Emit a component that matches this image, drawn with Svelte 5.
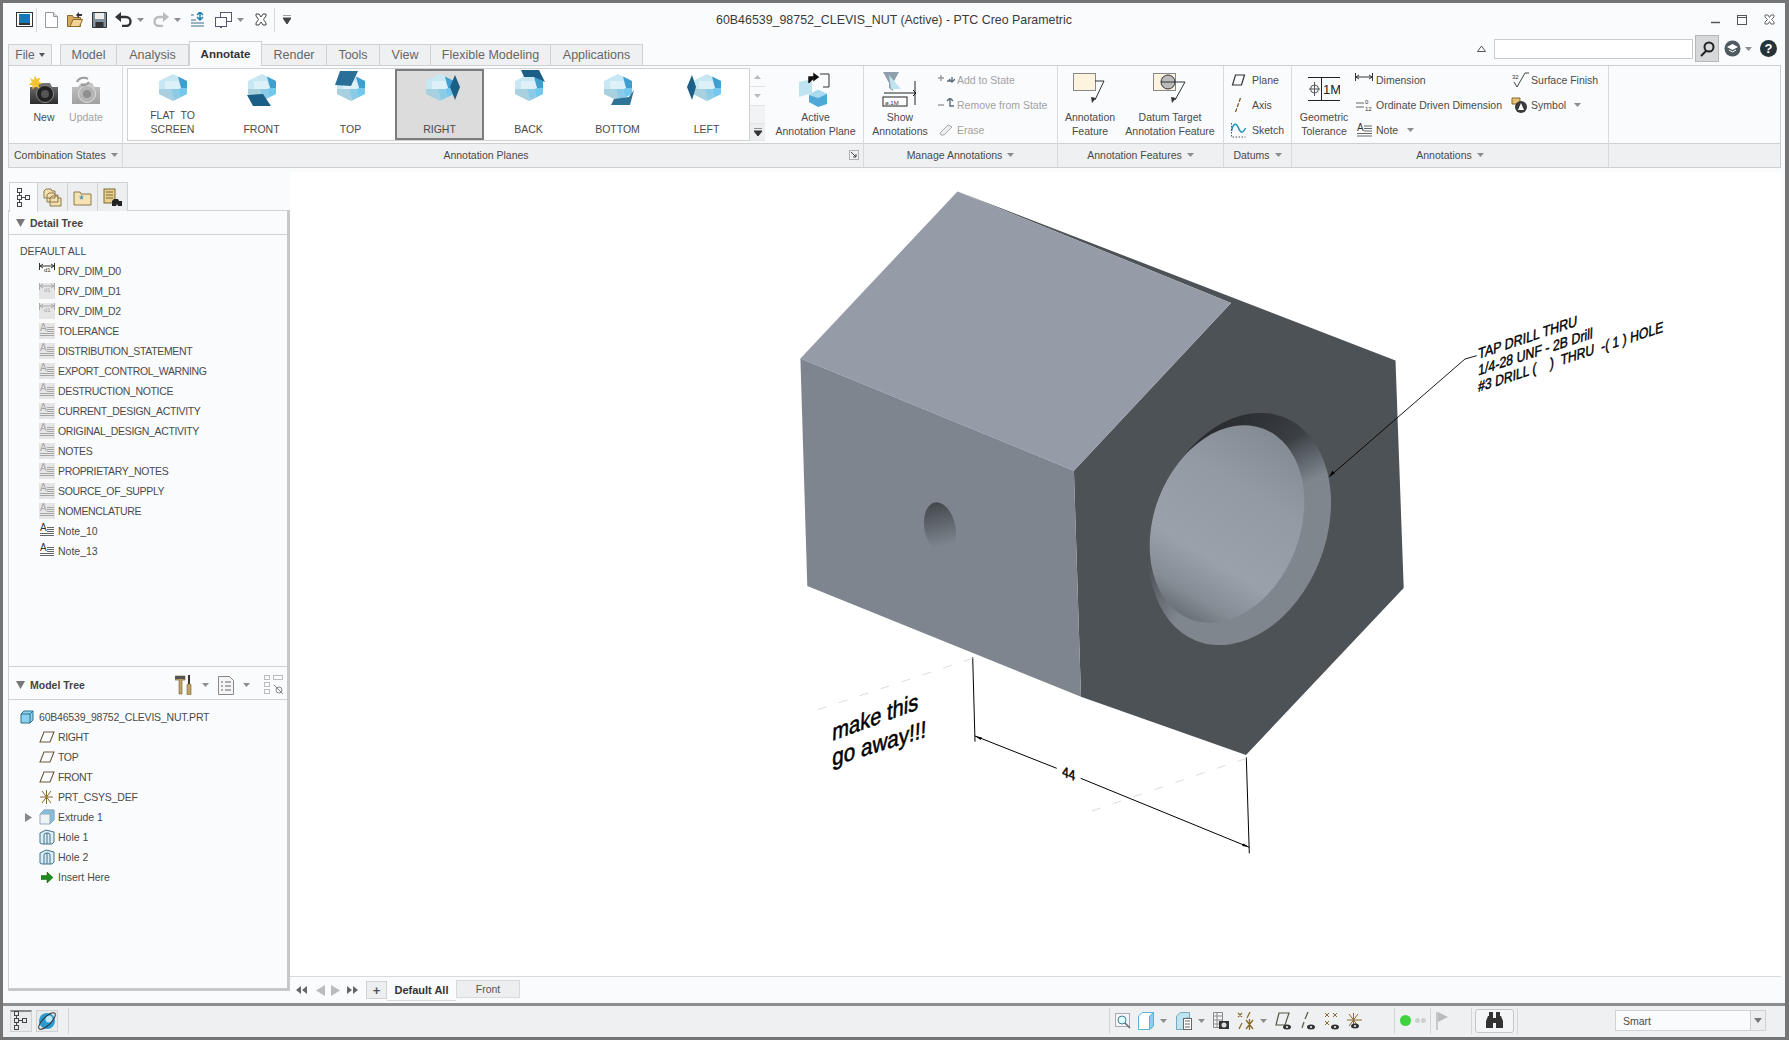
<script>
  const tabs = [
    { n: 'Model', c: 'w57' }, { n: 'Analysis', c: 'w72' }, { n: 'Annotate', c: 'w73 on' },
    { n: 'Render', c: 'w65' }, { n: 'Tools', c: 'w53' }, { n: 'View', c: 'w51' },
    { n: 'Flexible Modeling', c: 'w120' }, { n: 'Applications', c: 'w92' }
  ];
  const planes = [
    { k: 'flat', l: ['FLAT  TO', 'SCREEN'] }, { k: 'front', l: ['FRONT'] }, { k: 'top', l: ['TOP'] },
    { k: 'right', l: ['RIGHT'] }, { k: 'back', l: ['BACK'] }, { k: 'bottom', l: ['BOTTOM'] }, { k: 'left', l: ['LEFT'] }
  ];
  const detail = [
    ['dim', 'DRV_DIM_D0', false], ['dim', 'DRV_DIM_D1', true], ['dim', 'DRV_DIM_D2', true],
    ['note', 'TOLERANCE', true], ['note', 'DISTRIBUTION_STATEMENT', true], ['note', 'EXPORT_CONTROL_WARNING', true],
    ['note', 'DESTRUCTION_NOTICE', true], ['note', 'CURRENT_DESIGN_ACTIVITY', true], ['note', 'ORIGINAL_DESIGN_ACTIVITY', true],
    ['note', 'NOTES', true], ['note', 'PROPRIETARY_NOTES', true], ['note', 'SOURCE_OF_SUPPLY', true],
    ['note', 'NOMENCLATURE', true], ['note', 'Note_10', false], ['note', 'Note_13', false]
  ];
</script>

{#snippet arrowDown(c = '')}
  <svg class={'dd ' + c} width="7" height="4" viewBox="0 0 7 4"><path d="M0 0h7L3.5 4z" fill="#8b8d90" /></svg>
{/snippet}

{#snippet treeGlyph()}
  <svg width="16" height="20" viewBox="0 0 16 20" fill="none" stroke="#444"><rect x="1.5" y=".5" width="4" height="4" /><rect x="1.5" y="7.5" width="4" height="4" /><rect x="1.5" y="14.5" width="4" height="4" /><rect x="9.5" y="7.5" width="4" height="4" /><path d="M3.5 4.5v3M3.5 11.5v3M5.5 9.5h4" /></svg>
{/snippet}

{#snippet noteIcon(bg)}
  <svg width="16" height="16" viewBox="0 0 16 16" class="ti" class:shade={bg}>
    <text x="1" y="8" class="glyph" class:fade={bg}>A</text>
    <path d="M8 4.5h7M8 6.5h7M8 8.5h7M1 10.5h14M1 12.5h14" stroke={bg ? '#a8a8a8' : '#666'} fill="none" />
  </svg>
{/snippet}

{#snippet dimIcon(bg)}
  <svg width="16" height="16" viewBox="0 0 16 16" class="ti" class:shade={bg}>
    <path d="M.5 0v7M15.5 0v7M1 3h14M1 3l3-2M1 3l3 2M15 3l-3-2M15 3l-3 2" stroke={bg ? '#aaa' : '#333'} fill="none" />
    <text x="5" y="9" class="tiny" class:fade={bg}>d1</text>
  </svg>
{/snippet}

{#snippet planeIcon()}
  <svg width="16" height="12" viewBox="0 0 16 12"><path d="M5 1h10l-4 10H1z" fill="none" stroke="#6b5b3e" stroke-width="1.1" /></svg>
{/snippet}

{#snippet holeIcon()}
  <svg width="16" height="16" viewBox="0 0 16 16" fill="#d9eef7" stroke="#48728a"><path d="M1 4l6-3 8 2v10l-2 2H3l-2-1z" /><path d="M5 15V6q0-2 3-2t3 2v9M8 4v11" fill="none" /></svg>
{/snippet}

{#snippet cube(k)}
  <svg width="44" height="40" viewBox="0 0 44 40">
    <path d="M22 5l14 7v13L22 32 8 25V12z" fill="#c7e8f3" />
    <path d="M27 7.5L36 12v7h-6z" fill="#3f9fd0" />
    <path d="M36 19v6l-7 3.5L27 20l3-1z" fill="#74c8ee" />
    <path d="M8 20h12l3 11.5-1 .5L8 25z" fill="#a9d0df" />
    <path d="M20 20h7l2 8.5L23 31.5z" fill="#8ccbe6" />
    <path d="M14 12h13l3 7-3 1H14z" fill="#dff1f8" />
    {#if k === 'front'}<path d="M7 26l16-1 8 12H13z" fill="#1c5f86" />{/if}
    {#if k === 'top'}<path d="M11 2h18l-7 15-16-1z" fill="#2a6f98" />{/if}
    {#if k === 'right'}<path d="M37 6l5 12-5 13-5-13z" fill="#1c5f86" />{/if}
    {#if k === 'back'}<path d="M14 1h18l6 12-11-5H17z" fill="#1c5f86" />{/if}
    {#if k === 'bottom'}<path d="M38 21l-4 15H15l3-6 15-2z" fill="#2f7396" />{/if}
    {#if k === 'left'}<path d="M7 6l-5 12 5 13 4-13z" fill="#1c5f86" />{/if}
  </svg>
{/snippet}

{#snippet camera(gray)}
  <svg width="32" height="30" viewBox="0 0 32 30">
    <defs>
      <linearGradient id={gray ? 'cg' : 'cd'} x1="0" y1="0" x2="0" y2="1">
        <stop offset="0" stop-color={gray ? '#c4c4c4' : '#777'} /><stop offset="1" stop-color={gray ? '#a0a0a0' : '#2c2c2c'} />
      </linearGradient>
    </defs>
    <path d="M2 12h6l3-4h11l2 4h6v17H2z" fill={gray ? 'url(#cg)' : 'url(#cd)'} />
    <circle cx="17" cy="19" r="8.5" fill={gray ? '#b5b5b5' : '#222'} stroke={gray ? '#ddd' : '#888'} />
    <circle cx="17" cy="19" r="4" fill={gray ? '#8f8f8f' : '#555'} />
    {#if gray}
      <path d="M7 7a7 6 0 0 1 11-3M19 7a7 6 0 0 1-8 3" stroke="#9b9b9b" stroke-width="2" fill="none" />
    {:else}
      <path d="M7 0l1.5 4 4-1.5-2 4 4 2-4 1 1 4-4-2-3 3 0-4-4-1 3.5-2.5-2-4 4 2z" fill="#f4c430" />
    {/if}
  </svg>
{/snippet}

<div class="window">
  <header class="titlebar">
    <div class="qat">
      <svg class="g0" width="17" height="15" viewBox="0 0 17 15"><rect x=".5" y=".5" width="16" height="14" fill="#fff" stroke="#333" /><rect x="3" y="2" width="11" height="9" fill="#1479b8" /><rect x="3" y="11" width="11" height="2" fill="#333" /></svg>
      <i class="qsep g3"></i>
      <svg class="g8" width="13" height="16" viewBox="0 0 13 16"><path d="M.5.5h8l4 4v11H.5z" fill="#fff" stroke="#999" /><path d="M8.5.5v4h4" fill="#ddd" stroke="#999" /></svg>
      <svg class="g9" width="16" height="15" viewBox="0 0 16 15"><path d="M.5 3.5h5l1 2h7v9H.5z" fill="#d8a95a" stroke="#8b6a2c" /><path d="M3 14.5l3-7h9.5l-3 7z" fill="#f2d596" stroke="#8b6a2c" /><path d="M9 3l3-3v2h3v2h-3v2z" fill="#333" /></svg>
      <svg class="g9" width="15" height="16" viewBox="0 0 15 16"><path d="M.5.5h14v15H.5z" fill="#7e8f9e" stroke="#333" /><rect x="3" y="1" width="9" height="6" fill="#eee" /><rect x="3.5" y="10" width="8" height="5" fill="#333" /></svg>
      <svg class="g8" width="17" height="15" viewBox="0 0 17 15"><path d="M4 5h7a4.5 4.5 0 0 1 0 9H7" fill="none" stroke="#333" stroke-width="2.4" /><path d="M6 0v10L0 5z" fill="#333" /></svg>
      <span class="g5">{@render arrowDown()}</span>
      <svg class="g9" width="16" height="15" viewBox="0 0 16 15"><path d="M12 5H6a4.5 4.5 0 0 0 0 9h4" fill="none" stroke="#bbb" stroke-width="2.4" /><path d="M10 0v10l6-5z" fill="#bbb" /></svg>
      <span class="g5">{@render arrowDown()}</span>
      <svg class="g9" width="15" height="16" viewBox="0 0 15 16"><path d="M1 3h3M1 8h5M1 11h13M1 14h13" stroke="#3d6f8c" /><path d="M7 3l3-3 3 3M10 0v8M7 5l3 3 3-3" stroke="#1c7fb0" fill="none" stroke-width="1.5" /></svg>
      <svg class="g10" width="17" height="16" viewBox="0 0 17 16" fill="#fff" stroke="#557"><rect x="5.5" y=".5" width="11" height="9" /><rect x=".5" y="5.5" width="11" height="9" /><path d="M7 15.5h-2M6 14.5v1" /></svg>
      <span class="g5">{@render arrowDown()}</span>
      <svg class="g11" width="12" height="13" viewBox="0 0 12 13" fill="#fff" stroke="#444"><path d="M1 1h3l2 3 2-3h3v2L8.5 6.5 11 10v2H8L6 9l-2 3H1v-2l2.5-3.5L1 3z" /></svg>
      <i class="qsep g7"></i>
      <svg class="g8" width="8" height="9" viewBox="0 0 8 9"><path d="M0 0h8M0 3h8L4 9z" stroke="#444" fill="#444" /></svg>
    </div>
    <div class="title">60B46539_98752_CLEVIS_NUT (Active) - PTC Creo Parametric</div>
    <div class="winctl">
      <svg width="9" height="9" viewBox="0 0 9 9"><path d="M0 7.5h9" stroke="#555" stroke-width="1.5" /></svg>
      <svg class="g17" width="10" height="10" viewBox="0 0 10 10"><rect x=".5" y=".5" width="9" height="9" fill="none" stroke="#555" /><path d="M0 2.5h10" stroke="#555" /></svg>
      <svg class="g17" width="11" height="11" viewBox="0 0 11 11" fill="#fff" stroke="#666"><path d="M1 1h3l1.5 2.5L7 1h3v2L7.5 5.5 10 8v2H7L5.5 7.5 4 10H1V8l2.5-2.5L1 3z" /></svg>
    </div>
  </header>

  <div class="tabrow">
    <div class="file">File <svg width="6" height="4" viewBox="0 0 6 4"><path d="M0 0h6L3 4z" fill="#555" /></svg></div>
    <nav class="tabs">
      {#each tabs as t}<div class={'tab ' + t.c}>{t.n}</div>{/each}
    </nav>
    <div class="search">
      <svg class="chev" width="9" height="7" viewBox="0 0 9 7" fill="none" stroke="#555"><path d="M.5 6.5L4.5 1l4 5.5z" /></svg>
      <div class="sbox"></div>
      <div class="sbtn"><svg width="15" height="16" viewBox="0 0 15 16" fill="none" stroke="#222" stroke-width="2"><circle cx="9" cy="6" r="4.5" /><path d="M6 10l-5 5" /></svg></div>
      <svg class="g5" width="17" height="17" viewBox="0 0 17 17"><circle cx="8.5" cy="8.5" r="8" fill="#4d5a60" /><path d="M3 7l5.500-3 5.500 3-5.500 3z" fill="#fff" /><path d="M5 10l3.500 2 3.500-2" fill="none" stroke="#fff" /></svg>
      <span class="g4">{@render arrowDown()}</span>
      <svg class="g8" width="17" height="17" viewBox="0 0 17 17"><circle cx="8.5" cy="8.5" r="8.5" fill="#26343a" /><text x="8.5" y="13" class="help">?</text></svg>
    </div>
  </div>

  <section class="ribbon">
    <div class="grp c-comb">
      <div class="body comb">
        <div class="big w42"><div class="bi cam">{@render camera(false)}</div><span>New</span></div>
        <div class="big w42 off"><div class="bi cam">{@render camera(true)}</div><span>Update</span></div>
      </div>
      <div class="foot left">Combination States {@render arrowDown('fa')}</div>
    </div>

    <div class="grp c-plane">
      <div class="body planes">
        <div class="gallery">
          {#each planes as p}
            <div class="gi" class:sel={p.k === 'right'}>
              {@render cube(p.k)}
              <div class="gl">{#each p.l as line}<span>{line}</span>{/each}</div>
            </div>
          {/each}
        </div>
        <div class="gscroll">
          <div class="sb"><svg width="7" height="4" viewBox="0 0 7 4"><path d="M0 4h7L3.5 0z" fill="#bbb" /></svg></div>
          <div class="sb"><svg width="7" height="4" viewBox="0 0 7 4"><path d="M0 0h7L3.5 4z" fill="#bbb" /></svg></div>
          <div class="sb grow"></div>
          <div class="sb dark"><svg width="8" height="8" viewBox="0 0 8 8"><path d="M0 0h8M0 3h8L4 8z" stroke="#333" fill="#333" /></svg></div>
        </div>
        <div class="big w98">
          <div class="bi">
            <svg width="38" height="36" viewBox="0 0 38 36"><path d="M2 11l13-3v14L2 26z" fill="#bfe4f1" /><path d="M12 24l9-5 9 4v10l-9 3-9-5z" fill="#4fa9d6" /><path d="M21 19l9 4-9 4-9-3z" fill="#a8dbef" /><path d="M23 3h9v13h-6" fill="none" stroke="#333" /><path d="M12 12V6h7M17 3l4 3-4 3z" stroke="#111" stroke-width="1.5" fill="#111" /></svg>
          </div>
          <span>Active</span><span>Annotation Plane</span>
        </div>
      </div>
      <div class="foot center pr">Annotation Planes
        <svg class="launch" width="10" height="10" viewBox="0 0 10 10"><rect x=".5" y=".5" width="9" height="9" fill="none" stroke="#b0b0b0" /><path d="M2 2l5 5M7 4v3H4" stroke="#444" fill="none" /></svg>
      </div>
    </div>

    <div class="grp c-manage">
      <div class="body rowb">
        <div class="big w72">
          <div class="bi">
            <svg width="36" height="36" viewBox="0 0 36 36"><path d="M1 1h16l-6 11v8l-4-3v-5z" fill="#8fa0ac" /><path d="M7 4l12 14H9z" fill="#bfe4f1" /><path d="M2 22h31M31 19l3 3-3 3" fill="none" stroke="#222" /><path d="M33 10v24" stroke="#222" /><rect x="1" y="26" width="24" height="9" fill="#fff" stroke="#222" /><text x="3" y="33.5" class="tiny">ø.1M</text></svg>
          </div>
          <span>Show</span><span>Annotations</span>
        </div>
        <div class="smalls m-a off">
          <div class="si"><svg width="18" height="14" viewBox="0 0 18 14"><path d="M4 2v6M1 5h6" stroke="#999" stroke-width="1.4" /><path d="M10 8h5v-4M12 6l3 3 3-3" fill="none" stroke="#5c6d78" stroke-width="1.4" /></svg><span>Add to State</span></div>
          <div class="si"><svg width="18" height="14" viewBox="0 0 18 14"><path d="M1 7h6" stroke="#999" stroke-width="1.4" /><path d="M10 3l3-3 3 3M13 0v8h4" fill="none" stroke="#5c6d78" stroke-width="1.4" /></svg><span>Remove from State</span></div>
          <div class="si"><svg width="18" height="14" viewBox="0 0 18 14"><path d="M3 10l8-8 4 2-8 8H4z" fill="#eee" stroke="#aaa" /></svg><span>Erase</span></div>
        </div>
      </div>
      <div class="foot center">Manage Annotations {@render arrowDown('fa')}</div>
    </div>

    <div class="grp c-feat">
      <div class="body rowb">
        <div class="big w64">
          <div class="bi feat">
            <svg width="34" height="32" viewBox="0 0 34 32"><rect x=".5" y=".5" width="22" height="17" fill="#fdf3df" stroke="#888" /><path d="M22 8h9L22 27" fill="none" stroke="#333" /><path d="M18 24l5 1-4 5z" fill="#333" /></svg>
          </div>
          <span>Annotation</span><span>Feature</span>
        </div>
        <div class="big w96">
          <div class="bi feat">
            <svg width="34" height="32" viewBox="0 0 34 32"><rect x=".5" y=".5" width="22" height="17" fill="#fdf3df" stroke="#888" /><circle cx="15" cy="9" r="7" fill="#bbb" stroke="#333" /><path d="M8 9h24L22 27" fill="none" stroke="#333" /><path d="M18 24l5 1-4 5z" fill="#333" /></svg>
          </div>
          <span>Datum Target</span><span>Annotation Feature</span>
        </div>
      </div>
      <div class="foot center">Annotation Features {@render arrowDown('fa')}</div>
    </div>

    <div class="grp c-dat">
      <div class="body rowb">
        <div class="smalls m-d">
          <div class="si dd20"><svg width="14" height="12" viewBox="0 0 14 12"><path d="M4 1h9l-3 10H1z" fill="none" stroke="#333" stroke-width="1.2" /></svg><span>Plane</span></div>
          <div class="si dd20"><svg width="14" height="14" viewBox="0 0 14 14"><path d="M9 0l-5 14" stroke="#7a5a2a" stroke-width="1.3" stroke-dasharray="4 1.5" /></svg><span>Axis</span></div>
          <div class="si dd20"><svg width="16" height="16" viewBox="0 0 16 16"><path d="M1 9c2-9 5-8 7-3s4 6 7 0" fill="none" stroke="#1f90b8" stroke-width="1.5" /><path d="M1 1v14h14" fill="none" stroke="#555" stroke-dasharray="1.5 1.5" /></svg><span>Sketch</span></div>
        </div>
      </div>
      <div class="foot center">Datums {@render arrowDown('fa')}</div>
    </div>

    <div class="grp c-ann">
      <div class="body rowb">
        <div class="big w64">
          <div class="bi gt">
            <svg width="32" height="24" viewBox="0 0 32 24"><path d="M0 .5h32M0 23.5h32M13.5 1v22" stroke="#222" fill="none" /><circle cx="6.5" cy="12" r="4" fill="none" stroke="#555" /><path d="M6.5 5v14M1 12h11" stroke="#555" /><text x="15" y="17" class="gtxt">1M</text></svg>
          </div>
          <span>Geometric</span><span>Tolerance</span>
        </div>
        <div class="smalls m-n">
          <div class="si"><svg width="18" height="14" viewBox="0 0 18 14"><path d="M.5 0v8M17.5 0v8M1 4h16M1 4l3-2M1 4l3 2M17 4l-3-2M17 4l-3 2" stroke="#333" fill="none" /></svg><span>Dimension</span></div>
          <div class="si"><svg width="18" height="14" viewBox="0 0 18 14"><path d="M1 5h8M1 9h8" stroke="#666" /><text x="10" y="6" class="tiny">0</text><text x="10" y="13" class="tiny">12</text></svg><span>Ordinate Driven Dimension</span></div>
          <div class="si"><svg width="18" height="14" viewBox="0 0 18 14"><text x="2" y="8" class="glyph">A</text><path d="M9 3h8M9 5.5h8M9 8h8M2 10.5h15M2 13h15" stroke="#666" fill="none" /></svg><span>Note</span> {@render arrowDown('na')}</div>
        </div>
        <div class="smalls m-s">
          <div class="si"><svg width="18" height="16" viewBox="0 0 18 16"><text x="1" y="7" class="tiny">32</text><path d="M3 10l3 5L14 1h4" fill="none" stroke="#444" /></svg><span>Surface Finish</span></div>
          <div class="si"><svg width="18" height="16" viewBox="0 0 18 16"><path d="M1 1h8v6H1z" fill="#e6c277" stroke="#86682c" /><circle cx="10" cy="10" r="6" fill="#3a3a3a" /><path d="M10 6l3 7H7z" fill="#fff" /></svg><span>Symbol</span> {@render arrowDown('na')}</div>
        </div>
      </div>
      <div class="foot center">Annotations {@render arrowDown('fa')}</div>
    </div>
    <div class="grp c-rest"><div class="body"></div><div class="foot"></div></div>
  </section>

  <div class="main">
    <aside class="side">
      <div class="sidetabs">
        <div class="stab act">{@render treeGlyph()}</div>
        <div class="stab"><svg width="19" height="19" viewBox="0 0 19 19" fill="#f2dfae" stroke="#8e7b4e"><path d="M1 3l2-2h5l1 2h3v7H1zM4 7l2-2h5l1 2h3v7H4zM7 10l2-2h5l1 2h3v8H7z" /></svg></div>
        <div class="stab"><svg width="19" height="17" viewBox="0 0 19 17"><path d="M1 3h6l1 2h10v11H1z" fill="#f6e3b4" stroke="#8e7b4e" /><text x="6" y="15" class="star">*</text></svg></div>
        <div class="stab"><svg width="20" height="20" viewBox="0 0 20 20"><rect x="1" y="2" width="11" height="14" fill="#e8cf8d" stroke="#7a6a3a" /><path d="M3 5h7M3 8h7M3 11h7" stroke="#7a6a3a" /><path d="M11 12h4l1 2h3v5h-4l-1-2-1 2h-4v-5z" fill="#222" /></svg></div>
      </div>
      <div class="panel">
        <div class="phead"><svg width="9" height="8" viewBox="0 0 9 8"><path d="M0 0h9L4.5 8z" fill="#777" /></svg><b>Detail Tree</b></div>
        <div class="tree dt">
          <div class="row r0">DEFAULT ALL</div>
          {#each detail as d}
            <div class="row r1">
              {#if d[0] === 'dim'}{@render dimIcon(d[2])}{:else}{@render noteIcon(d[2])}{/if}
              <span class:caps={d[1] === d[1].toUpperCase()}>{d[1]}</span>
            </div>
          {/each}
        </div>
        <div class="phead second">
          <svg width="9" height="8" viewBox="0 0 9 8"><path d="M0 0h9L4.5 8z" fill="#777" /></svg><b>Model Tree</b>
          <div class="ptools">
            <svg width="18" height="20" viewBox="0 0 18 20"><path d="M0 1h10v4H7v14H4V5H0z" fill="#c3a468" stroke="#6c5a30" stroke-width=".6" /><path d="M0 1h10v3H0z" fill="#555" /><path d="M14 0v9" stroke="#333" stroke-width="2" /><rect x="12" y="9" width="4" height="11" rx="1" fill="#c3a468" stroke="#6c5a30" stroke-width=".6" /></svg>
            <span class="g9">{@render arrowDown()}</span>
            <svg class="g9" width="16" height="19" viewBox="0 0 16 19"><path d="M.5.5h11l4 4v14H.5z" fill="#f5f5f5" stroke="#888" /><path d="M3 6h2M7 6h6M3 10h2M7 10h6M3 14h2M7 14h6" stroke="#666" /></svg>
            <span class="g9">{@render arrowDown()}</span>
            <svg class="g14" width="20" height="20" viewBox="0 0 20 20" fill="none" stroke="#bbb"><rect x=".5" y=".5" width="5" height="4" /><rect x=".5" y="7.5" width="5" height="4" /><rect x=".5" y="14.5" width="5" height="4" /><rect x="9.5" y=".5" width="9" height="4" /><circle cx="15" cy="15" r="3" stroke="#888" /><path d="M10 10l9 9" stroke="#888" /></svg>
          </div>
        </div>
        <div class="tree mt">
          <div class="row r0 top"><svg width="14" height="14" viewBox="0 0 14 14"><path d="M1 4l3-3h9v9l-3 3H1z" fill="#8ad3f0" stroke="#2e6f8c" /><path d="M1 4h9v9M10 4l3-3" fill="none" stroke="#2e6f8c" /></svg><span class="capsl">60B46539_98752_CLEVIS_NUT.PRT</span></div>
          <div class="row r1"><i class="ic">{@render planeIcon()}</i><span class="caps">RIGHT</span></div>
          <div class="row r1"><i class="ic">{@render planeIcon()}</i><span class="caps">TOP</span></div>
          <div class="row r1"><i class="ic">{@render planeIcon()}</i><span class="caps">FRONT</span></div>
          <div class="row r1"><i class="ic"><svg width="16" height="16" viewBox="0 0 16 16"><path d="M3 2l9 12M12 2L3 14M7.5 1v14M1 8h13" stroke="#8b6a2c" fill="none" /></svg></i><span class="capsl">PRT_CSYS_DEF</span></div>
          <div class="row r1 exp">
            <svg class="tw" width="7" height="9" viewBox="0 0 7 9"><path d="M0 0l7 4.5L0 9z" fill="#888" /></svg>
            <i class="ic"><svg width="16" height="16" viewBox="0 0 16 16"><path d="M1 5l4-4h10v10l-4 4H1z" fill="#eef3f6" stroke="#9ab" /><path d="M1 5h10l4-4H5zM11 5v10l4-4V1z" fill="#7cc0e4" stroke="#9ab" /></svg></i><span>Extrude 1</span>
          </div>
          <div class="row r1"><i class="ic">{@render holeIcon()}</i><span>Hole 1</span></div>
          <div class="row r1"><i class="ic">{@render holeIcon()}</i><span>Hole 2</span></div>
          <div class="row r1"><i class="ic c"><svg width="12" height="11" viewBox="0 0 12 11"><path d="M0 3.5h6V0l6 5.5L6 11V7.5H0z" fill="#1c8a1c" stroke="#0c5a0c" stroke-width=".5" /></svg></i><span>Insert Here</span></div>
        </div>
      </div>
    </aside>

    <div class="stage">
      <svg class="canvas" width="1491" height="804" viewBox="290 172 1491 804">
        <defs>
          <linearGradient id="ringV" gradientUnits="userSpaceOnUse" x1="1215" y1="420" x2="1290" y2="490">
            <stop offset="0" stop-color="#393e43" /><stop offset=".33" stop-color="#3d4247" /><stop offset=".78" stop-color="#7d858d" /><stop offset="1" stop-color="#7f868e" />
          </linearGradient>
          <linearGradient id="ringH" gradientUnits="userSpaceOnUse" x1="1150" y1="548" x2="1231" y2="568">
            <stop offset="0" stop-color="#26292c" stop-opacity=".85" /><stop offset=".5" stop-color="#26292c" stop-opacity=".45" /><stop offset="1" stop-color="#26292c" stop-opacity="0" />
          </linearGradient>
          <linearGradient id="floor" gradientUnits="userSpaceOnUse" x1="1240" y1="425" x2="1205" y2="625">
            <stop offset="0" stop-color="#848b93" /><stop offset=".3" stop-color="#939aa4" /><stop offset=".68" stop-color="#9aa1ab" /><stop offset=".88" stop-color="#858c94" /><stop offset="1" stop-color="#686e75" />
          </linearGradient>
          <linearGradient id="small" x1="0" y1="0" x2="0" y2="1">
            <stop offset="0" stop-color="#43484d" /><stop offset=".85" stop-color="#7e858e" />
          </linearGradient>
        </defs>
        <path d="M957.5 191.4L1395.5 360.4 1403.7 587.9 1246 755 1081 696.8 1073.9 470.7 1231 302.9z" fill="#4d5256" />
        <path d="M957.5 191.4L800.4 358.6 1073.9 470.7 1231 302.9z" fill="#959ca7" />
        <path d="M800.4 358.6L1073.9 470.7 1081 696.8 807.3 586z" fill="#7e858e" />
        <ellipse cx="940" cy="528" rx="15.5" ry="26" transform="rotate(-12 940 528)" fill="url(#small)" />
        <ellipse cx="1240" cy="529" rx="85.8" ry="120" transform="rotate(21.2 1240 529)" fill="url(#ringV)" />
        <ellipse cx="1240" cy="529" rx="85.8" ry="120" transform="rotate(21.2 1240 529)" fill="url(#ringH)" />
        <ellipse cx="1227" cy="524" rx="73" ry="102" transform="rotate(21 1227 524)" fill="url(#floor)" />

        <g fill="none" stroke="#000" stroke-width="1">
          <path d="M972.7 657.3L975 741.7M975 736L1056.7 768.3M1080.7 778.3L1249.3 847.3M1246.3 757.3L1249.3 853.3" />
          <path d="M1329.3 476.7L1465 359 1476.7 355.7" stroke-width=".9" />
        </g>
        <path d="M975 736l7 1.5-1.5 2.5zM1249 847l-7-1 1.5-2.5zM1329.3 476.7l3-6 2.5 2.5z" fill="#000" />
        <path d="M972.7 658.3L811.7 711.7M1246.3 758.3L1085 813.3" stroke="#dcdcdc" stroke-dasharray="9 13" fill="none" />

        <g class="note">
          <text transform="matrix(1,-.37,-.05,1.2,832,741)" class="nb" textLength="86" lengthAdjust="spacingAndGlyphs">make this</text>
          <text transform="matrix(1,-.31,-.05,1.2,832,766)" class="nb" textLength="94" lengthAdjust="spacingAndGlyphs">go away!!!</text>
          <text transform="matrix(1,.38,-.05,1.2,1062,776)" class="ns" textLength="13" lengthAdjust="spacingAndGlyphs">44</text>
          <text transform="matrix(1,-.336,-.05,1.25,1478,359)" class="ns" textLength="99" lengthAdjust="spacingAndGlyphs">TAP DRILL THRU</text>
          <text transform="matrix(1,-.326,-.05,1.25,1478,375.5)" class="ns" textLength="114.5" lengthAdjust="spacingAndGlyphs">1/4-28 UNF - 2B Drill</text>
          <text transform="matrix(1,-.325,-.05,1.25,1478,392)" class="ns" xml:space="preserve" textLength="185" lengthAdjust="spacingAndGlyphs">#3 DRILL (    )  THRU  -( 1 ) HOLE</text>
        </g>
      </svg>
      <div class="strip">
        <div class="nav">
          <svg width="11" height="8" viewBox="0 0 11 8"><path d="M5 0v8L0 4zM11 0v8L6 4z" fill="#666" /></svg>
          <svg class="g9" width="9" height="11" viewBox="0 0 9 11"><path d="M9 0v11L0 5.5z" fill="#bbb" /></svg>
          <svg class="g6" width="9" height="11" viewBox="0 0 9 11"><path d="M0 0v11l9-5.5z" fill="#bbb" /></svg>
          <svg class="g7" width="11" height="8" viewBox="0 0 11 8"><path d="M0 0v8l5-4zM6 0v8l5-4z" fill="#666" /></svg>
        </div>
        <div class="plus">+</div>
        <div class="vt on">Default All</div>
        <div class="vt">Front</div>
      </div>
    </div>
  </div>

  <footer class="status">
    <div class="sleft">
      <div class="sb1 pressed">{@render treeGlyph()}</div>
      <div class="sb1"><svg width="20" height="20" viewBox="0 0 20 20"><circle cx="10" cy="10" r="8" fill="#2a9ad0" /><circle cx="12" cy="8" r="3.5" fill="#bfe8f6" /><ellipse cx="10" cy="10" rx="11" ry="4" transform="rotate(-45 10 10)" fill="none" stroke="#333" /></svg></div>
      <i class="vsep s1"></i>
    </div>
    <div class="sright">
      <i class="vsep"></i>
      <svg class="g5" width="16" height="16" viewBox="0 0 16 16"><rect x=".5" y=".5" width="14" height="13" fill="#f6f6f6" stroke="#aab" /><circle cx="7" cy="7" r="4" fill="#dff" stroke="#4a7a9a" /><path d="M10 10l5 5" stroke="#666" stroke-width="1.5" /></svg>
      <svg class="g7" width="16" height="18" viewBox="0 0 16 18"><path d="M.5 4l4-3.500h11V14l-4 3.500H.5z" fill="#fff" stroke="#5fb0d4" /><path d="M11.5 4v13.500l4-3.500V.5z" fill="#8ad0ec" stroke="#5fb0d4" /></svg>
      <span class="g6">{@render arrowDown()}</span>
      <svg class="g9" width="16" height="18" viewBox="0 0 16 18"><path d="M.5 4l4-3.500h9V6h-3v11.500h-10z" fill="#bfe4f1" stroke="#7ab" /><rect x="7.5" y="6.5" width="8" height="11" fill="#fff" stroke="#666" /><path d="M9 9h5M9 12h5M9 15h5" stroke="#666" /></svg>
      <span class="g6">{@render arrowDown()}</span>
      <svg class="g8" width="16" height="18" viewBox="0 0 16 18"><path d="M.5.5h9v15h-9zM.5 4h9M.5 8h9M.5 12h9M4 .5v15" fill="#f4f4f4" stroke="#888" /><rect x="6" y="9" width="10" height="8" fill="#333" /><circle cx="11" cy="13" r="2.5" fill="#ddd" /></svg>
      <svg class="g8" width="17" height="18" viewBox="0 0 17 18"><g stroke="#8b6a2c" fill="none" stroke-width="1.3"><path d="M1 1l4 4M5 1L1 5M13 0l-3 6M2 17l3-6M9 8l7 9M16 8l-7 9M12.5 7v11" /></g></svg>
      <span class="g6">{@render arrowDown()}</span>
      <svg class="g8" width="16" height="18" viewBox="0 0 16 18"><path d="M4 1h10L10 13H1z" fill="none" stroke="#554" stroke-width="1.2" /><ellipse cx="12" cy="15" rx="4" ry="2.5" fill="#333" /><circle cx="12" cy="15" r="1" fill="#fff" /></svg>
      <svg class="g10" width="14" height="18" viewBox="0 0 14 18"><path d="M7 0L4 7M3 10L1 16" stroke="#554" stroke-width="1.2" /><ellipse cx="10" cy="15" rx="4" ry="2.5" fill="#333" /><circle cx="10" cy="15" r="1" fill="#fff" /></svg>
      <svg class="g9" width="15" height="18" viewBox="0 0 15 18"><path d="M1 1l4 4M5 1L1 5M9 1l4 4M13 1L9 5M1 9l4 4M5 9l-4 4" stroke="#8b6a2c" fill="none" /><ellipse cx="11" cy="15" rx="4" ry="2.5" fill="#333" /><circle cx="11" cy="15" r="1" fill="#fff" /></svg>
      <svg class="g7" width="18" height="18" viewBox="0 0 18 18"><path d="M3 2l9 12M12 2L3 14M7.5 1v14M1 8h15" stroke="#8b6a2c" fill="none" /><ellipse cx="9" cy="14" rx="4" ry="2.5" fill="#333" /><circle cx="9" cy="14" r="1" fill="#fff" /></svg>
      <i class="vsep g30"></i>
      <span class="dot green g5"></span>
      <span class="dot g2a"></span>
      <span class="dot g1a"></span>
      <i class="vsep g4"></i>
      <svg class="g5" width="12" height="18" viewBox="0 0 12 18"><path d="M1 0v18" stroke="#bbb" stroke-width="1.5" /><path d="M2 0l10 5-10 5z" fill="#bbb" /></svg>
      <i class="vsep g23"></i>
      <div class="binbtn g3"><svg width="17" height="17" viewBox="0 0 17 17" fill="#333"><path d="M3 0h4v4H3zM10 0h4v4h-4zM2 4h5v12H0V9zM10 4h5l2 5v7h-7zM7 6h3v5H7z" /></svg></div>
      <i class="vsep g3"></i>
      <div class="smart"><span>Smart</span><div class="caret"><svg width="8" height="5" viewBox="0 0 8 5"><path d="M0 0h8L4 5z" fill="#777" /></svg></div></div>
    </div>
  </footer>
</div>

<style>
  :global(body) { margin: 0; }
  :global(html), :global(body) { background: #fafbfd; }
  .window {
    width: 1789px; height: 1040px; box-sizing: border-box; display: flex; flex-direction: column;
    border: solid #747474; border-width: 3px 4px 3px 3px; background: #fafbfd; overflow: hidden;
    font-family: "Liberation Sans", Arial, sans-serif; font-size: 10.5px; color: #4a4a4a;
  }
  svg { display: block; flex: none; }
  i { display: block; font-style: normal; }

  .g0 { margin-left: 0; } .g3 { margin-left: 3px; } .g4 { margin-left: 4px; } .g5 { margin-left: 5px; }
  .g6 { margin-left: 6px; } .g7 { margin-left: 7px; } .g8 { margin-left: 8px; } .g9 { margin-left: 9px; }
  .g10 { margin-left: 10px; } .g11 { margin-left: 11px; } .g14 { margin-left: 14px; } .g17 { margin-left: 17px; }
  .g23 { margin-left: 23px; } .g30 { margin-left: 30px; }

  .titlebar { height: 37px; box-sizing: border-box; padding-bottom: 4px; display: grid; grid-template-columns: 1fr auto 1fr; align-items: center; flex: none; }
  .qat { display: flex; align-items: center; padding-left: 13px; height: 30px; }
  .qsep { width: 1px; height: 24px; background: #d8d8d8; }
  .title { font-size: 12.4px; color: #3a3a3a; }
  .winctl { display: flex; justify-content: flex-end; align-items: center; padding-right: 10px; }

  .tabrow { height: 25px; display: flex; align-items: flex-end; padding-left: 5px; flex: none; position: relative; z-index: 1; }
  .file { width: 44px; height: 21px; box-sizing: border-box; border: 1px solid #cfd1d3; border-bottom: 0; background: #eff0f2; display: flex; align-items: center; justify-content: center; gap: 4px; font-size: 12px; color: #666; }
  .tabs { display: flex; margin-left: 8px; align-items: flex-end; }
  .tab { height: 21px; box-sizing: border-box; border: 1px solid #cfd1d3; border-width: 1px 1px 0 0; background: #eff0f2; display: flex; align-items: center; justify-content: center; font-size: 12.5px; color: #666; font-weight: 400; }
  .tab:first-child { border-left: 1px solid #cfd1d3; }
  .tab.on { height: 25px; background: #fafbfd; color: #333; font-weight: 700; font-size: 11.5px; margin-bottom: -1px; border-left: 1px solid #cfd1d3; }
  .w57 { width: 57px; } .w72 { width: 72px; } .w73 { width: 73px; } .w65 { width: 65px; } .w53 { width: 53px; }
  .w51 { width: 51px; } .w120 { width: 120px; } .w92 { width: 92px; }

  .search { margin-left: auto; display: flex; align-items: center; padding-right: 8px; height: 30px; align-self: center; margin-top: -8px; }
  .chev { margin-right: 8px; }
  .sbox { width: 199px; height: 20px; background: #fff; border: 1px solid #c9cbcd; box-sizing: border-box; }
  .sbtn { width: 24px; height: 27px; margin-left: 2px; background: #d6d8da; border: 1px solid #b5b7b9; box-sizing: border-box; display: flex; align-items: center; justify-content: center; }

  .ribbon { margin-left: 5px; width: 1773px; height: 103px; flex: none; display: grid; grid-template-columns: 114px 741px 194px 166px 68px 317px 1fr; border: 1px solid #cdcfd1; box-sizing: border-box; }
  .grp { display: flex; flex-direction: column; border-right: 1px solid #d8dadc; min-width: 0; }
  .c-rest { border-right: 0; }
  .body { flex: 1; display: flex; min-height: 0; }
  .foot { height: 24px; flex: none; background: #eef0f2; border-top: 1px solid #cdcfd1; display: flex; align-items: center; gap: 5px; box-sizing: border-box; padding-bottom: 2px; font-size: 10.5px; position: relative; }
  .foot.left { padding-left: 5px; }
  .foot.center { justify-content: center; }
  .foot.pr { padding-right: 14px; }
  .launch { position: absolute; right: 4px; top: 6px; }
  .fa { margin-top: 1px; }

  .comb { padding: 2px 0 0 14px; }
  .big { display: flex; flex-direction: column; align-items: center; line-height: 14px; }
  .bi { height: 41px; box-sizing: border-box; display: flex; align-items: flex-end; justify-content: center; padding-bottom: 2px; }
  .bi.cam, .bi.feat { padding-bottom: 4px; }
  .bi.gt { padding-bottom: 8px; }
  .big span { display: block; white-space: nowrap; }
  .big .bi + span { margin-top: 1px; }
  .w42 { width: 42px; } .w98 { width: 98px; } .w72 { width: 72px; } .w64 { width: 64px; } .w96 { width: 96px; }
  .off { color: #a2a2a2; }

  .planes { padding: 2px 0 0 4px; }
  .gallery { width: 623px; height: 73px; background: #fff; border: 1px solid #cfd1d3; box-sizing: border-box; display: flex; }
  .gi { width: 89px; flex: none; display: flex; flex-direction: column; align-items: center; box-sizing: border-box; position: relative; }
  .gi.sel { background: #dcdcdd; outline: 2px solid #7c7c7c; outline-offset: -2px; }
  .gl { position: absolute; bottom: 4px; left: 0; right: 0; display: flex; flex-direction: column; align-items: center; line-height: 14px; white-space: pre; }
  .gscroll { width: 15px; height: 73px; display: flex; flex-direction: column; }
  .sb { height: 18px; background: #fafbfd; border: 1px solid #e2e4e6; border-width: 0 0 1px 0; display: flex; align-items: center; justify-content: center; }
  .sb.grow { flex: 1; background: #f2f3f5; }
  .sb.dark { height: 16px; background: #eceef0; }
  .planes .big { padding-left: 3px; box-sizing: border-box; }

  .rowb { padding-top: 2px; }
  .smalls { display: flex; flex-direction: column; margin-top: -1px; }
  .si { height: 25px; display: flex; align-items: center; gap: 2px; white-space: nowrap; }
  .dd20 { gap: 5px; }
  .na { margin-left: 6px; }
  .m-a { margin-left: 1px; }
  .m-d { margin-left: 6px; }
  .dd20 svg { width: 17px; }
  .m-n { margin-left: -1px; }
  .m-n .si { gap: 3px; }
  .m-s { margin-left: 9px; }
  .gtxt { font: 13px "Liberation Sans", sans-serif; fill: #222; }
  .tiny { font: 6px "Liberation Sans", sans-serif; fill: #333; }
  .glyph { font: 10px "Liberation Sans", sans-serif; fill: #333; }
  .fade { fill: #a5a5a5; }
  .help { font: 700 13px "Liberation Sans", sans-serif; fill: #fff; text-anchor: middle; }
  .star { font: 12px "Liberation Sans", sans-serif; fill: #1c7fb0; }

  .main { flex: 1; display: flex; min-height: 0; }
  .side { width: 287px; flex: none; box-sizing: border-box; padding: 14px 0 12px 5px; display: flex; flex-direction: column; }
  .sidetabs { display: flex; height: 29px; flex: none; margin-bottom: -1px; position: relative; z-index: 1; padding-left: 1px; }
  .stab { width: 30px; box-sizing: border-box; border: 1px solid #cfd1d3; border-width: 1px 1px 0 0; background: #eceef0; display: flex; align-items: center; justify-content: center; }
  .stab.act { background: #fafbfd; border-left: 1px solid #cfd1d3; height: 30px; width: 29px; }
  .panel { flex: 1; display: flex; flex-direction: column; border: 1px solid #cfd1d3; border-right: 3px solid #c6c8ca; border-bottom: 3px solid #c6c8ca; min-height: 0; }
  .phead { height: 24px; flex: none; display: flex; align-items: center; padding-left: 7px; gap: 5px; border-bottom: 1px solid #cfd1d3; box-sizing: border-box; font-size: 10.5px; color: #444; }
  .phead.second { height: 34px; padding-top: 4px; border-top: 1px solid #cfd1d3; }
  .phead b { font-weight: 700; }
  .ptools { margin-left: auto; display: flex; align-items: center; padding-right: 3px; }
  .tree { padding-top: 6px; box-sizing: border-box; min-height: 0; }
  .tree.dt { height: 431px; flex: none; }
  .tree.mt { padding-top: 7px; flex: 1; }
  .row { height: 20px; display: flex; align-items: center; white-space: nowrap; }
  .caps { letter-spacing: -.35px; }
  .capsl { letter-spacing: -.2px; }
  .r0 { padding-left: 11px; letter-spacing: -.1px; }
  .r0.top { gap: 5px; padding-left: 11px; }
  .r1 { padding-left: 30px; gap: 3px; }
  .exp { position: relative; }
  .tw { position: absolute; left: 16px; top: 6px; }
  .ic { width: 16px; height: 16px; display: flex; align-items: center; justify-content: center; }
  .ti.shade { background: #e4e5e4; }

  .stage { flex: 1; display: flex; flex-direction: column; margin: 4px 4px 0 0; min-width: 0; }
  .canvas { background: #fff; flex: none; }
  .strip { flex: 1; border-top: 1px solid #d8dadc; display: flex; align-items: flex-start; padding-top: 3px; background: #fafbfd; }
  .nav { width: 76px; height: 20px; display: flex; align-items: center; padding-left: 6px; box-sizing: border-box; }
  .plus { width: 21px; height: 18px; margin-top: 1px; background: #eceef0; border: 1px solid #d0d2d4; box-sizing: border-box; display: flex; align-items: center; justify-content: center; font-size: 13px; font-weight: 700; color: #555; }
  .vt { width: 64px; height: 18px; box-sizing: border-box; background: #eceef0; border: 1px solid #d8dadc; display: flex; align-items: center; justify-content: center; font-size: 10.5px; color: #555; }
  .vt.on { width: 69px; height: 21px; background: #fafbfd; font-weight: 700; font-size: 11px; color: #333; border-width: 0 0 1px 0; }

  .status { height: 34px; flex: none; box-sizing: border-box; border-top: 3px solid #8e8e8e; background: #eef0f2; display: flex; align-items: center; justify-content: space-between; padding: 0 19px 2px 7px; }
  .sleft { display: flex; align-items: center; gap: 4px; }
  .sb1 { width: 22px; height: 22px; box-sizing: border-box; border: 1px solid #cfd1d3; background: #e8eaec; display: flex; align-items: center; justify-content: center; }
  .sb1.pressed { border-top: 2px solid #888; }
  .vsep { width: 1px; height: 26px; background: #d3d5d7; }
  .s1 { margin-left: 6px; }
  .sright { display: flex; align-items: center; }
  .dot { width: 5px; height: 5px; border-radius: 50%; background: #cfcfcf; flex: none; }
  .g2a { margin-left: 4px; } .g1a { margin-left: 1px; }
  .dot.green { width: 11px; height: 11px; background: #3fd43f; }
  .binbtn { width: 39px; height: 24px; box-sizing: border-box; border: 1px solid #c4c6c8; border-radius: 3px; background: #f4f5f6; display: flex; align-items: center; justify-content: center; }
  .smart { margin-left: 97px; width: 151px; height: 21px; box-sizing: border-box; border: 1px solid #cfd1d3; background: #fafbfd; display: flex; align-items: center; }
  .smart span { padding-left: 7px; flex: 1; }
  .caret { width: 14px; height: 100%; background: #eceef0; border-left: 1px solid #cfd1d3; display: flex; align-items: center; justify-content: center; }

  .nb { font: 20px "Liberation Sans", sans-serif; fill: #000; stroke: #000; stroke-width: .45px; }
  .ns { font: 12px "Liberation Sans", sans-serif; fill: #000; stroke: #000; stroke-width: .35px; white-space: pre; }
</style>
